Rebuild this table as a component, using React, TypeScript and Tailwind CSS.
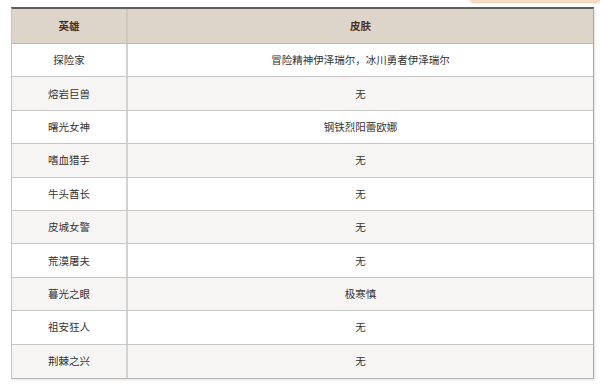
import React from "react";

const rows: { hero: string; skin: string }[] = [
  { hero: "探险家", skin: "冒险精神伊泽瑞尔，冰川勇者伊泽瑞尔" },
  { hero: "熔岩巨兽", skin: "无" },
  { hero: "曙光女神", skin: "钢铁烈阳蕾欧娜" },
  { hero: "嗜血猎手", skin: "无" },
  { hero: "牛头酋长", skin: "无" },
  { hero: "皮城女警", skin: "无" },
  { hero: "荒漠屠夫", skin: "无" },
  { hero: "暮光之眼", skin: "极寒慎" },
  { hero: "祖安狂人", skin: "无" },
  { hero: "荆棘之兴", skin: "无" },
];

export default function App() {
  return (
    <div
      className="relative h-[387px] w-[600px] overflow-hidden bg-white"
      style={{ fontFamily: '"Noto Sans CJK SC", "Noto Sans", sans-serif' }}
    >
      {/* tab edge peeking in at the top */}
      <div className="absolute right-0 top-[-6px] h-[8px] w-[130px] rounded-b-sm bg-[#f7dcc0] shadow-[0_1px_2px_rgba(200,150,100,0.5)]" />

      <div className="pl-[11px] pt-[7px]">
        <div className="w-[583px] border-t-2 border-[#5e5e5e] border-r border-r-[#a8a8a8] border-b border-b-[#b5b5b5] border-l border-l-[#c4c4c4] shadow-[1px_1px_2px_rgba(0,0,0,0.12)]">
          <div className="flex h-[35px] border-b border-[#c2bab0] bg-[#ddd4ca] text-[10.5px] font-bold text-[#4b2f1c]">
            <div className="flex w-[116px] items-center justify-center border-r-2 border-[#cfc8c0]">英雄</div>
            <div className="flex flex-1 items-center justify-center">皮肤</div>
          </div>
          {rows.map((r, i) => (
            <div
              key={r.hero}
              className={
                "flex h-[33.4px] text-[10.5px] text-[#333] " +
                (i < rows.length - 1 ? "border-b border-[#c6c6c6] " : "") +
                (i % 2 === 0 ? "bg-white" : "bg-[#f6f5f3]")
              }
            >
              <div className="flex w-[116px] items-center justify-center border-r-2 border-[#d2d2d2]">{r.hero}</div>
              <div className="flex flex-1 items-center justify-center">{r.skin}</div>
            </div>
          ))}
        </div>
      </div>
    </div>
  );
}
